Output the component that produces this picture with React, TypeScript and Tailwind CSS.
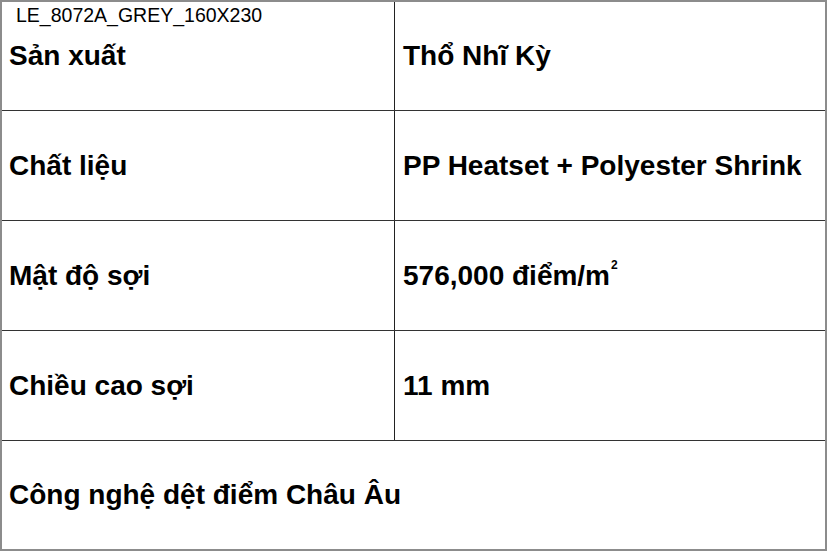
const ROWS: [string, React.ReactNode][] = [
  ['Sản xuất', 'Thổ Nhĩ Kỳ'],
  ['Chất liệu', 'PP Heatset + Polyester Shrink'],
  [
    'Mật độ sợi',
    <>
      576,000 điểm/m
      <sup className="relative -top-[11px] ml-[1px] text-[12px] leading-none align-baseline">2</sup>
    </>,
  ],
  ['Chiều cao sợi', '11 mm'],
];

export default function App() {
  return (
    <div
      className="relative w-[827px] h-[551px] bg-white border-2 border-[#8c8c8c] flex flex-col text-black"
      style={{ fontFamily: '"Liberation Sans", Arial, sans-serif' }}
    >
      {/* product code label */}
      <div className="absolute left-[14px] top-[4px] text-[19.5px] leading-none">
        LE_8072A_GREY_160X230
      </div>

      {ROWS.map(([label, value], i) => (
        <div
          key={label}
          className={`flex border-b border-[#333] ${i === 0 ? 'h-[109px]' : 'h-[110px]'}`}
        >
          <div className="w-[393px] border-r border-[#222] flex items-center pl-[7px] text-[28px] font-bold">
            {label}
          </div>
          <div className="flex-1 flex items-center pl-[8px] text-[28px] font-bold">{value}</div>
        </div>
      ))}

      <div className="flex-1 flex items-center pl-[7px] text-[28px] font-bold">
        Công nghệ dệt điểm Châu Âu
      </div>
    </div>
  );
}
